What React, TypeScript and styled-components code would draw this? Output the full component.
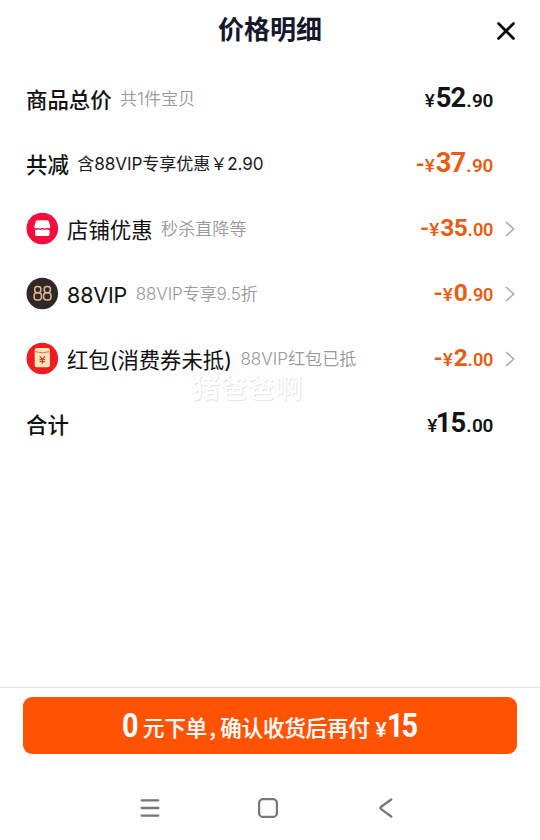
import React from 'react';
import styled, { createGlobalStyle } from 'styled-components';

const GlobalStyle = createGlobalStyle`
  * { box-sizing: border-box; }
  body { margin: 0; background: #fefefe; }
`;

const Screen = styled.main`
  position: relative;
  display: flex;
  flex-direction: column;
  width: 540px;
  height: 840px;
  overflow: hidden;
  background: #fefefe;
  color: #111;
  font-family: Inter, 'Noto Sans CJK SC', sans-serif;
  white-space: nowrap;
`;

const Header = styled.header`
  display: grid;
  grid-template-columns: 70px 1fr 70px;
  align-items: center;
  height: 66px;
  padding-bottom: 6px;
`;

const Title = styled.h1`
  grid-column: 2;
  margin: -4px 0 0;
  text-align: center;
  font: 700 26px/38px 'Noto Sans CJK SC', sans-serif;
  color: #15182d;
`;

const CloseButton = styled.button`
  justify-self: center;
  display: flex;
  border: 0;
  padding: 0;
  margin: 2px 0 0 1px;
  background: none;
`;

const List = styled.section`
  flex: 1;
`;

const Row = styled.div`
  display: flex;
  align-items: center;
  height: 65px;
  padding: 0 24px 0 26px;
`;

const RowIcon = styled.span`
  display: flex;
  margin-right: 8px;
`;

const Label = styled.span<{ $strong?: boolean; $tracking?: number }>`
  margin-top: 2px;
  font-size: 21.4px;
  line-height: 32px;
  font-weight: ${(p) => (p.$strong ? 500 : 400)};
  letter-spacing: ${(p) => p.$tracking ?? 0}px;
`;

const Note = styled.span<{ $dark?: boolean; $tracking?: number }>`
  margin-left: 8.5px;
  font-size: 17.1px;
  line-height: 26px;
  font-weight: ${(p) => (p.$dark ? 400 : 350)};
  letter-spacing: ${(p) => p.$tracking ?? 0}px;
  color: ${(p) => (p.$dark ? '#1c1c1c' : '#999')};
`;

const PriceBox = styled.span<{ $discount?: boolean; $compact?: boolean }>`
  display: flex;
  align-items: baseline;
  margin-left: auto;
  padding-top: 1px;
  font: 600 ${(p) => (p.$compact ? 18.2 : 19)}px/32px Roboto, sans-serif;
  color: ${(p) => (p.$discount ? '#e95d12' : '#141414')};
`;

const Minus = styled.span`
  width: 9px;
  font-size: 24px;
`;

const Yen = styled.span`
  width: 11px;
  font-size: 19px;
  font-weight: 500;
`;

const Whole = styled.span<{ $shift: number; $compact?: boolean }>`
  margin-left: ${(p) => p.$shift}px;
  font-size: ${(p) => (p.$compact ? 24.5 : 27.3)}px;
  font-weight: 700;
  letter-spacing: -0.7px;
`;

const Dot = styled.span<{ $compact?: boolean }>`
  width: ${(p) => (p.$compact ? 6 : 6.5)}px;
  text-align: center;
`;

const Cents = styled.span`
  letter-spacing: -0.4px;
`;

const ArrowSlot = styled.span`
  display: flex;
  justify-content: flex-end;
  width: 23px;
`;

const Watermark = styled.span`
  position: absolute;
  left: 192px;
  top: 366px;
  font: 500 27.5px/40px 'Noto Sans CJK SC', sans-serif;
  color: #fff;
  text-shadow: 1px 1px 1px #e2e2e8, 0 0 1px #f0f0f4;
`;

const Footer = styled.footer`
  height: 88px;
  padding: 9px 23px 0;
  border-top: 1px solid #e3e1e2;
`;

const PayButton = styled.button`
  display: flex;
  align-items: baseline;
  justify-content: center;
  width: 494px;
  height: 57px;
  border: 0;
  border-radius: 9px;
  padding: 0 2px 0 0;
  background: #ff5202;
  color: #fff;
  font: 500 21.4px/54px 'Noto Sans CJK SC', sans-serif;
`;

const PayDigits = styled.span<{ $width: number; $tracking?: number }>`
  width: ${(p) => p.$width}px;
  font: 700 34px/56px Roboto, sans-serif;
  letter-spacing: ${(p) => p.$tracking ?? 0}px;
  text-align: left;
  transform: scaleX(0.85);
  transform-origin: left;
`;

const PayText = styled.span`
  margin: 0 5px 0 5px;
  transform: translateY(-1px);
  -webkit-text-stroke: 0.2px currentColor;
`;

const Comma = styled.span`
  display: inline-block;
  width: 13px;
  text-indent: -2px;
`;

const PayYen = styled.span`
  width: 12px;
  font: 500 21px/56px Roboto, sans-serif;
`;

const NavBar = styled.nav`
  display: grid;
  grid-template-columns: repeat(3, 118px);
  justify-content: center;
  justify-items: center;
  align-items: center;
  height: 65px;
  padding-right: 4px;
`;

const ShopIcon = () => (
  <svg width="33" height="33" viewBox="0 0 33 33">
    <circle cx="16.3" cy="16.5" r="15.8" fill="#f50b3d" />
    <path d="M11.8 8.3h9q1.6 0 2.1 1.4l1.3 4.2c.5 2.4-1.7 3-3.6 1.9-1.4 1.1-2.9 1.1-4.3 0-1.4 1.1-2.9 1.1-4.3 0-1.9 1.1-4.1.5-3.6-1.9l1.3-4.2q.5-1.4 2.1-1.4z" fill="#fff" />
    <path d="M9.1 17.8c1.1.3 2.2.1 3-.5 1.4 1 2.9 1 4.2 0 1.3 1 2.8 1 4.2 0 .8.6 1.9.8 3 .5v4.8q0 1.3-1.3 1.3H10.4q-1.3 0-1.3-1.3z" fill="#fff" />
  </svg>
);

const VipIcon = () => (
  <svg width="33" height="33" viewBox="0 0 33 33">
    <circle cx="16.3" cy="16.5" r="15.8" fill="#302826" />
    <g fill="none" stroke="#e0b58f" strokeWidth="1.5">
      <rect x="8.7" y="9.4" width="6.2" height="6.3" rx="2.6" />
      <rect x="8.1" y="15.7" width="7.4" height="7.4" rx="3" />
      <rect x="18.2" y="9.4" width="6.2" height="6.3" rx="2.6" />
      <rect x="17.6" y="15.7" width="7.4" height="7.4" rx="3" />
    </g>
  </svg>
);

const PacketIcon = () => (
  <svg width="33" height="33" viewBox="0 0 33 33">
    <circle cx="16.3" cy="16.5" r="15.8" fill="#ef1c20" />
    <rect x="8.7" y="6" width="15.2" height="19.2" rx="2" fill="#ffe3ba" />
    <path d="M9 9.6q7.4 2.4 14.6 0" fill="none" stroke="#e36b48" strokeWidth="1" />
    <path d="m13.7 14.2 2.7 3.2 2.7-3.2M16.4 17.4v4.4M13.6 17.6h5.6M13.6 19.7h5.6" fill="none" stroke="#df3b2b" strokeWidth="1.2" />
  </svg>
);

const Arrow = () => (
  <svg width="12" height="16" viewBox="0 0 12 16" fill="none" stroke="#aaa" strokeWidth="1.5">
    <path d="m2 1 7.7 7L2 15" />
  </svg>
);

type PriceProps = { whole: string; cents: string; discount?: boolean; compact?: boolean; wholeShift?: number };

const Price = ({ whole, cents, discount, compact, wholeShift = 0 }: PriceProps) => (
  <PriceBox $discount={discount} $compact={compact}>
    {discount && <Minus>-</Minus>}
    <Yen>¥</Yen>
    <Whole $shift={wholeShift} $compact={compact}>{whole}</Whole>
    <Dot $compact={compact}>.</Dot>
    <Cents>{cents}</Cents>
  </PriceBox>
);

type ItemProps = PriceProps & {
  label: string;
  note?: string;
  icon?: React.ReactNode;
  darkNote?: boolean;
  labelTracking?: number;
  noteTracking?: number;
};

const Item = ({ label, note, icon, darkNote, labelTracking, noteTracking, ...price }: ItemProps) => (
  <Row>
    {icon && <RowIcon>{icon}</RowIcon>}
    <Label $strong={!icon} $tracking={labelTracking}>{label}</Label>
    {note && <Note $dark={darkNote} $tracking={noteTracking}>{note}</Note>}
    <Price {...price} compact={Boolean(icon)} />
    <ArrowSlot>{icon && <Arrow />}</ArrowSlot>
  </Row>
);

export default function App() {
  return (
    <Screen>
      <GlobalStyle />
      <Header>
        <Title>价格明细</Title>
        <CloseButton aria-label="关闭">
          <svg width="20" height="20" viewBox="0 0 20 20" fill="none" stroke="#080808" strokeWidth="2.7" strokeLinecap="round">
            <path d="m2.5 2.5 15 15m0-15-15 15" />
          </svg>
        </CloseButton>
      </Header>
      <List>
        <Item label="商品总价" note="共1件宝贝" whole="52" cents="90" />
        <Item label="共减" note="含88VIP专享优惠￥2.90" noteTracking={-0.1} darkNote whole="37" cents="90" discount />
        <Item icon={<ShopIcon />} label="店铺优惠" note="秒杀直降等" whole="35" cents="00" discount />
        <Item icon={<VipIcon />} label="88VIP" labelTracking={-0.1} note="88VIP专享9.5折" noteTracking={-0.12} whole="0" cents="90" discount />
        <Item icon={<PacketIcon />} label="红包(消费券未抵)" labelTracking={-0.05} note="88VIP红包已抵" whole="2" cents="00" discount />
        <Item label="合计" whole="15" cents="00" wholeShift={-2.5} />
      </List>
      <Watermark>猪爸爸啊</Watermark>
      <Footer>
        <PayButton>
          <PayDigits $width={16}>0</PayDigits>
          <PayText>元下单<Comma>,</Comma>确认收货后再付</PayText>
          <PayYen>¥</PayYen>
          <PayDigits $width={29} $tracking={-2.5}>15</PayDigits>
        </PayButton>
      </Footer>
      <NavBar>
        <svg width="20" height="20" viewBox="0 0 20 20" fill="none" stroke="#777" strokeWidth="2.3" strokeLinecap="round">
          <path d="M1.7 2.3h16.6M1.7 10h16.6M1.7 17.7h16.6" />
        </svg>
        <svg width="20" height="20" viewBox="0 0 20 20" fill="none" stroke="#777" strokeWidth="2.3">
          <rect x="1.1" y="1.1" width="17.8" height="17.8" rx="4" />
        </svg>
        <svg width="14" height="20" viewBox="0 0 14 20" fill="none" stroke="#777" strokeWidth="2.3" strokeLinecap="round" strokeLinejoin="round">
          <path d="M12.2 1.5 2.2 8.8q-1.6 1.2 0 2.4l10 7.3" />
        </svg>
      </NavBar>
    </Screen>
  );
}
